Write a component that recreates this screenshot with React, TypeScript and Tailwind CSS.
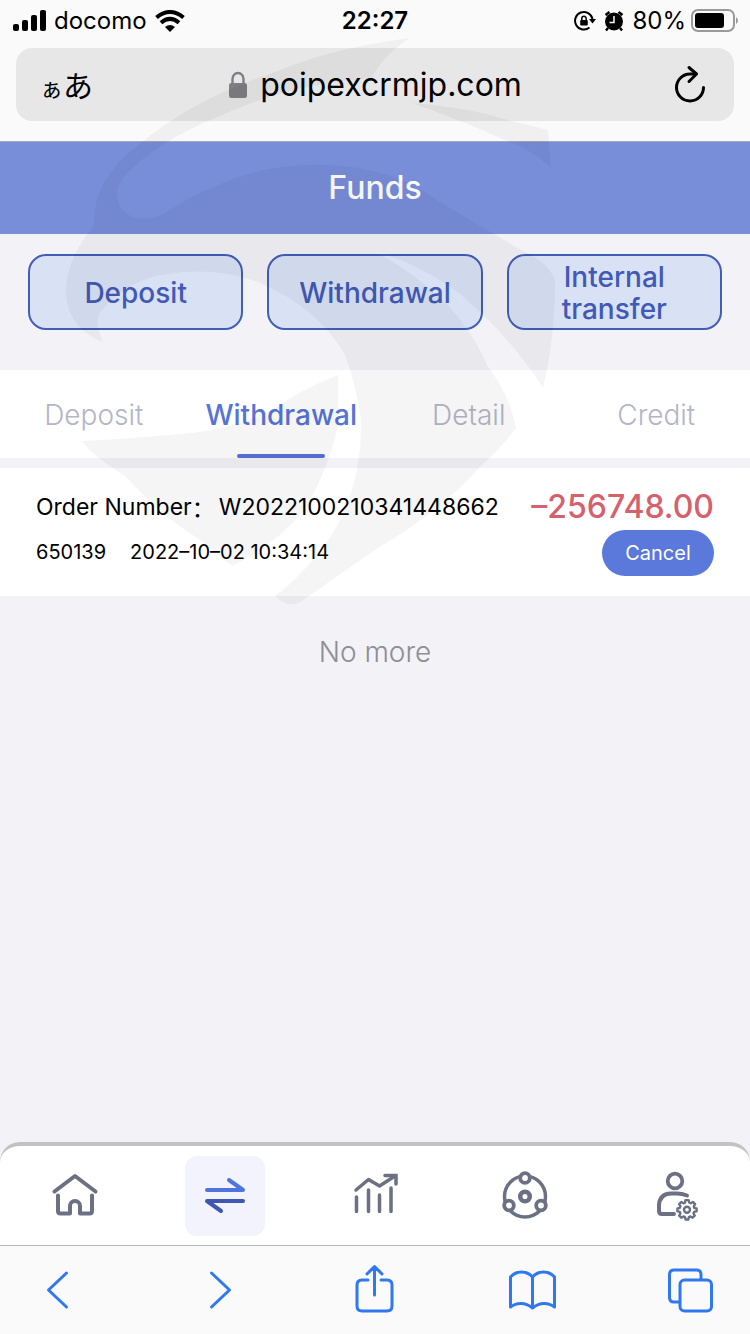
import { useState } from 'react';
import type { ReactNode } from 'react';
import clsx from 'clsx';

const TABS = ['Deposit', 'Withdrawal', 'Detail', 'Credit'];
const ACTIONS = ['Deposit', 'Withdrawal', 'Internal transfer'];

function StatusBar() {
  return (
    <div className="grid grid-cols-3 items-center h-10 px-3 pt-0.5 text-2xl leading-8 text-black">
      <div className="flex items-center gap-2">
        <svg width="34" height="22" viewBox="0 0 34 22" fill="currentColor">
          <rect x="1" y="14" width="6" height="7" rx="2" />
          <rect x="10" y="10" width="6" height="11" rx="2" />
          <rect x="19" y="5" width="6" height="16" rx="2" />
          <rect x="28" y="0" width="6" height="21" rx="2" />
        </svg>
        <span>docomo</span>
        <svg width="30" height="22" viewBox="0 0 30 22" fill="none" stroke="currentColor" strokeWidth="4">
          <path d="M1.5 7.5Q15-3.5 28.5 7.5" />
          <path d="M6 12.8Q15 5 24 12.8" />
          <path d="M10 17Q15 13 20 17L15 22Z" fill="currentColor" stroke="none" />
        </svg>
      </div>
      <div className="text-center font-semibold">22:27</div>
      <div className="flex items-center justify-end gap-2">
        <svg width="22" height="22" viewBox="0 0 22 22" fill="none" stroke="currentColor" strokeWidth="2">
          <path d="M15.5 17.5A8.8 8.8 0 1 1 18.5 9" />
          <path d="M15 9h7l-3.5 4.5Z" fill="currentColor" stroke="none" />
          <rect x="6.2" y="10" width="7.6" height="5.5" rx="1" fill="currentColor" stroke="none" />
          <path d="M7.800 10.500V8.500a2.200 2.200 0 0 1 4.400 0v2" strokeWidth="1.5" />
        </svg>
        <svg width="20" height="22" viewBox="0 0 20 22" fill="none" stroke="currentColor">
          <circle cx="10" cy="11.5" r="9" fill="currentColor" stroke="none" />
          <path d="M1.5 5L5.5 2M18.5 5L14.5 2M4 18L2 20.5M16 18l2 2.5" strokeWidth="2.5" />
          <path d="M10 6v6.500H5.500" stroke="#fafafb" strokeWidth="1.5" />
        </svg>
        <div className="flex items-center gap-1">
          <span>80%</span>
          <svg width="48" height="24" viewBox="0 0 48 24" fill="none">
            <rect x="2" y="1" width="42" height="21" rx="6" stroke="#9a9a9c" strokeWidth="2" />
            <rect x="5" y="4" width="29" height="15" rx="3" fill="currentColor" />
            <path d="M46 8q2 1.500 2 3.500t-2 3.500Z" fill="#9a9a9c" />
          </svg>
        </div>
      </div>
    </div>
  );
}

function AddressBar() {
  return (
    <div className="grid grid-cols-[88px_1fr_88px] items-center h-[73px] mx-4 mt-2 rounded-2xl bg-[#e7e7e7] text-black">
      <button className="flex items-baseline pl-6 font-['Noto_Sans_CJK_JP',sans-serif]">
        <span className="text-[23px]">ぁ</span>
        <span className="text-[30px]">あ</span>
      </button>
      <div className="flex items-center justify-center gap-3">
        <svg width="20" height="28" viewBox="0 0 20 28" fill="none">
          <rect x="1" y="12" width="18" height="15" rx="2.500" fill="#7e7e83" />
          <path d="M4.500 13V8a5.500 6 0 0 1 11 0v5" stroke="#7e7e83" strokeWidth="2.400" />
        </svg>
        <span className="text-[32px] leading-10">poipexcrmjp.com</span>
      </div>
      <button aria-label="Reload" className="flex justify-center">
        <svg width="36" height="40" viewBox="0 0 36 40" fill="none" stroke="currentColor" strokeWidth="3" strokeLinecap="round" strokeLinejoin="round">
          <path d="M31.500 22.500A13.500 13.500 0 1 1 18 9H24" />
          <path d="M17 2.500L24.500 9L17 16.500" />
        </svg>
      </button>
    </div>
  );
}

function OrderRow() {
  return (
    <section className="flex justify-between items-start mt-2.5 h-32 px-9 pt-[19px] bg-white text-black">
      <div>
        <div className="flex text-[23px] leading-10">
          <span>Order Number</span>
          <span className="w-[27px] font-['Noto_Sans_CJK_SC',sans-serif]" lang="zh-CN">：</span>
          <span>W2022100210341448662</span>
        </div>
        <div className="flex gap-6 pt-[9px] text-xl leading-8">
          <span>650139</span>
          <span>2022–10–02 10:34:14</span>
        </div>
      </div>
      <div className="flex flex-col items-end">
        <span className="text-[32px] leading-10 font-medium text-[#d5616d]">–256748.00</span>
        <button className="w-28 h-[46px] mt-[3px] rounded-full bg-[#5b78db] text-xl text-white">Cancel</button>
      </div>
    </section>
  );
}

function NavItem({ label, active, children }: { label: string; active?: boolean; children: ReactNode }) {
  return (
    <button
      aria-label={label}
      className={clsx('flex items-center justify-center justify-self-center size-20 rounded-xl', active && 'bg-[#f2f3fd]')}
    >
      <svg
        width="48"
        height="48"
        viewBox="0 0 48 48"
        fill="none"
        stroke="#6b7083"
        strokeWidth="4"
        strokeLinecap="round"
        strokeLinejoin="round"
        className="overflow-visible"
      >
        {children}
      </svg>
    </button>
  );
}

function BottomNav() {
  return (
    <nav className="grid grid-cols-5 h-[103px] pt-2.5 border-t-4 border-[#c2c2c2] rounded-t-[20px] bg-white">
      <NavItem label="Home">
        <path d="M3.500 19.500L24 4L44.500 19.500" />
        <path d="M7 23.500V39q0 2.500 2.500 2.500H19V34a5 5 0 0 1 10 0v7.500h9.500q2.500 0 2.500-2.500V23.500" />
      </NavItem>
      <NavItem label="Funds" active>
        <path d="M6 18H42L28 8" stroke="#4f74dd" />
        <path d="M42 29H6L20 39" stroke="#3f57b0" />
      </NavItem>
      <NavItem label="Reports">
        <g strokeWidth="3.500">
          <path d="M5 18L17.500 7.500L28.500 14L44 4" />
          <path d="M34 3.500H45V12" strokeLinejoin="miter" />
          <path d="M5.500 25V39.500M17.500 18V39.500M28.500 23V39.500M40 16V39.500" />
        </g>
      </NavItem>
      <NavItem label="Network">
        <circle cx="24" cy="24.500" r="20.500" strokeWidth="3.500" />
        <g fill="#fff" strokeWidth="3.800">
          <circle cx="24" cy="6" r="4.800" />
          <circle cx="8" cy="33.500" r="4.800" />
          <circle cx="40" cy="33.500" r="4.800" />
        </g>
        <circle cx="24" cy="24.500" r="4.800" strokeWidth="4.500" />
      </NavItem>
      <NavItem label="Account">
        <circle cx="24" cy="9" r="7.300" strokeWidth="3.800" />
        <path d="M36 23.500Q31 21.500 26 21.500H20Q8 22 8 34V39Q8 42 11 42H23" />
        <path
          d="M34 28.500h4l.7 3 2 .9 2.700-1.600 2.700 2.800-1.600 2.600.5 2 3 .8v3.500l-3 .7-.9 2 1.600 2.600-2.700 2.700-2.700-1.600-1.900.8-.7 3h-3.500l-.7-3-2-.8-2.600 1.600-2.700-2.700 1.600-2.600-.8-2-3-.7v-3.500l3-.8.8-2-1.600-2.600 2.700-2.700 2.600 1.600 2-.9Z"
          strokeWidth="3"
          fill="#fff"
          transform="translate(7.200 5.300) scale(0.800)"
        />
        <circle cx="36" cy="37.800" r="3" strokeWidth="2.400" />
      </NavItem>
    </nav>
  );
}

function ToolButton({ label, children }: { label: string; children: ReactNode }) {
  return (
    <button aria-label={label}>
      <svg width="52" height="52" viewBox="0 0 52 52" fill="none" stroke="#2f78ef" strokeWidth="3" strokeLinecap="round" strokeLinejoin="round">
        {children}
      </svg>
    </button>
  );
}

function BrowserToolbar() {
  return (
    <div className="flex items-center justify-between h-[89px] px-8 border-t border-[#b8b8bb] bg-[#fafafb]">
      <ToolButton label="Back">
        <path d="M34.500 9L16.500 26L34.500 43" />
      </ToolButton>
      <ToolButton label="Forward">
        <path d="M20.500 9L38.500 26L20.500 43" />
      </ToolButton>
      <ToolButton label="Share">
        <path d="M19 16H13Q8 16 8 21V42Q8 47 13 47H38Q43 47 43 42V21Q43 16 38 16H32" />
        <path d="M25.500 31V3M18 10L25.500 2.500L33 10" />
      </ToolButton>
      <ToolButton label="Bookmarks">
        <path d="M24.500 13Q20 8 13.500 8T2.500 13V43Q7 39.500 13 39.500T24.500 44Q30 39.500 36 39.500T46.500 43V13Q42 8 35.500 8T24.500 13V44" />
      </ToolButton>
      <ToolButton label="Tabs">
        <path d="M35 15V10.500Q35 6 30.500 6H8Q3.500 6 3.500 10.500V33.500Q3.500 38 8 38H13" />
        <rect x="14" y="16" width="31.500" height="31" rx="4.500" />
      </ToolButton>
    </div>
  );
}

// Decorative emblem laid over the top of the screen
function Emblem() {
  return (
    <svg className="absolute inset-x-0 top-0 w-full pointer-events-none" viewBox="0 0 750 640" aria-hidden="true">
      <g fill="#000" fillOpacity="0.04">
        <path d="M410 38Q330 48 270 74Q195 98 138 145Q92 180 94 225Q64 262 66 296Q70 330 103 342Q94 322 100 312Q130 278 168 274Q220 266 262 284Q318 308 345 355Q356 385 361 420Q362 490 328 540Q302 576 275 596Q290 612 306 598L378 548Q440 512 482 465Q504 445 516 428Q510 395 487 365Q475 335 445 302Q410 270 376 252Q420 264 460 294Q510 336 543 388Q555 340 555 280Q548 262 525 252Q480 226 440 202Q395 168 330 165Q270 162 220 184Q190 196 165 213Q140 226 122 210Q112 194 124 176Q160 140 220 116Q290 84 372 78Q382 56 410 38Z" />
        <path d="M412 103Q470 108 500 118L548 130L551 168Q530 148 500 138Q465 122 412 103Z" />
        <path d="M338 375Q300 390 275 408Q240 428 190 433Q140 438 82 441Q92 456 125 476Q160 515 200 540L232 566Q275 545 305 510Q330 465 338 425Z" />
      </g>
    </svg>
  );
}

export default function App() {
  const [tab, setTab] = useState('Withdrawal');

  return (
    <div className="relative flex flex-col min-h-screen bg-[#f2f2f7] font-[Inter,'Liberation_Sans',sans-serif]">
      <header className="pb-5 bg-[#fafafb] border-b border-[#a9a3b4]">
        <StatusBar />
        <AddressBar />
      </header>

      <h1 className="h-[92px] bg-[#788ed9] text-center text-[32px] leading-[92px] font-medium text-white">Funds</h1>

      <main className="flex-1">
        <div className="grid grid-cols-3 gap-6 px-7 pt-5 pb-10">
          {ACTIONS.map((action) => (
            <button
              key={action}
              className="flex items-center justify-center h-[76px] px-8 last:px-12 pt-0.5 border-2 border-[#415db8] rounded-[18px] bg-[#d9e1f5] text-[28px] leading-8 font-medium text-[#415ab5]"
            >
              {action}
            </button>
          ))}
        </div>

        <div role="tablist" className="grid grid-cols-4 h-[88px] bg-white">
          {TABS.map((name) => (
            <button
              key={name}
              role="tab"
              aria-selected={tab === name}
              onClick={() => setTab(name)}
              className={clsx(
                'relative flex items-center justify-center pt-0.5 text-[28px]',
                tab === name ? 'font-medium text-[#5674d6]' : 'font-light text-[#b3b6c6]',
              )}
            >
              {name}
              {tab === name && <span className="absolute bottom-0 w-[88px] h-1 rounded-full bg-[#5674d6]" />}
            </button>
          ))}
        </div>

        <OrderRow />

        <p className="pt-9 text-center text-[28px] leading-10 font-light text-[#8e8e93]">No more</p>
      </main>

      <BottomNav />
      <BrowserToolbar />
      <Emblem />
    </div>
  );
}
